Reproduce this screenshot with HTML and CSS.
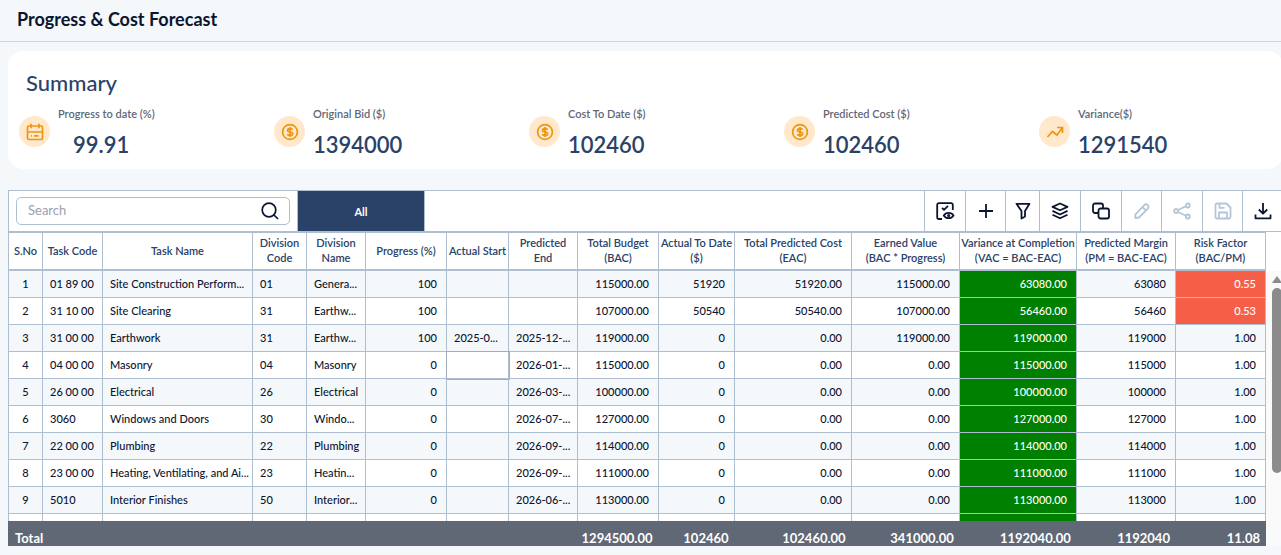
FILE: index.html
```html
<!DOCTYPE html>
<html lang="en">
<head>
<meta charset="utf-8">
<title>Progress &amp; Cost Forecast</title>
<link rel="stylesheet" href="styles.css">
</head>
<body>
<svg class="defs" aria-hidden="true">
  <symbol id="dollar" viewBox="0 0 18 18"><circle cx="9" cy="9" r="7.4"/><path d="M11.6 6.6C11.1 5.8 10.2 5.6 9 5.6c-1.5 0-2.5.6-2.5 1.7S7.500 8.900 9 9s2.600.600 2.600 1.700-1.100 1.700-2.600 1.700c-1.200 0-2.200-.300-2.700-1.100M9 4v10"/></symbol>
</svg>
<header class="page-header"><h1 class="page-title">Progress &amp; Cost Forecast</h1></header>
<main class="content">
  <section class="summary">
    <h2 class="summary-title">Summary</h2>
    <div class="metrics">
      <div class="metric">
        <span class="badge"><svg class="badge-icon" viewBox="0 0 18 18"><rect x="1.500" y="3" width="15" height="13.500" rx="1.500"/><path d="M1.500 9h15M5 .800v4.400M13 .800v4.400M5 12.800h1M8 12.800h4.500"/></svg></span>
        <div class="metric-text"><span class="metric-label">Progress to date (%)</span><span class="metric-value indented">99.91</span></div>
      </div>
      <div class="metric">
        <span class="badge"><svg class="badge-icon"><use href="#dollar"/></svg></span>
        <div class="metric-text"><span class="metric-label">Original Bid ($)</span><span class="metric-value">1394000</span></div>
      </div>
      <div class="metric">
        <span class="badge"><svg class="badge-icon"><use href="#dollar"/></svg></span>
        <div class="metric-text"><span class="metric-label">Cost To Date ($)</span><span class="metric-value">102460</span></div>
      </div>
      <div class="metric">
        <span class="badge"><svg class="badge-icon"><use href="#dollar"/></svg></span>
        <div class="metric-text"><span class="metric-label">Predicted Cost ($)</span><span class="metric-value">102460</span></div>
      </div>
      <div class="metric">
        <span class="badge"><svg class="badge-icon" viewBox="0 0 18 18"><path d="M1.500 14 6.500 8.500l4.500 3.500 5.500-7.500M11 4.500h5.500V10"/></svg></span>
        <div class="metric-text"><span class="metric-label">Variance($)</span><span class="metric-value">1291540</span></div>
      </div>
    </div>
  </section>

  <section class="grid-panel">
    <div class="toolbar">
      <label class="search">
        <input class="search-input" type="text" placeholder="Search" aria-label="Search">
        <svg class="search-icon" viewBox="0 0 18 18"><circle cx="8" cy="8" r="6.800"/><path d="m13 13 4 4"/></svg>
      </label>
      <button class="tab" type="button">All</button>
      <div class="tools">
        <button class="tool wide" type="button" aria-label="Columns"><svg class="icon" viewBox="0 0 20 20"><path d="M7 18H4a1.800 1.800 0 0 1-1.800-1.800V4A1.800 1.800 0 0 1 4 2.200h12A1.800 1.800 0 0 1 17.800 4v5M7 6.800l2 2 4-4"/><path d="M8.800 14.500c2-3.500 7.700-3.500 9.700 0-2 3.500-7.700 3.500-9.700 0Z"/><circle cx="13.700" cy="14.500" r=".7"/></svg></button>
        <button class="tool" type="button" aria-label="Add"><svg class="icon" viewBox="0 0 20 20"><path d="M10 3v14M3 10h14"/></svg></button>
        <button class="tool narrow" type="button" aria-label="Filter"><svg class="icon" viewBox="0 0 20 20"><path d="M3.500 2.800h13L12 10v5.500L8.500 17.500V10Z"/></svg></button>
        <button class="tool wide" type="button" aria-label="Layers"><svg class="icon" viewBox="0 0 20 20"><path d="m10 2.500 7.500 3.400L10 9.300 2.500 5.900ZM2.500 9.900l7.500 3.600 7.500-3.600M2.500 13.700l7.500 3.600 7.500-3.600"/></svg></button>
        <button class="tool wide" type="button" aria-label="Copy"><svg class="icon" viewBox="0 0 20 20"><rect x="7.500" y="7.500" width="10.500" height="10" rx="2"/><path d="M7.500 12H4a2 2 0 0 1-2-2V4.500a2 2 0 0 1 2-2h6a2 2 0 0 1 2 2v3"/></svg></button>
        <button class="tool" type="button" aria-label="Edit" disabled><svg class="icon" viewBox="0 0 20 20"><path d="M3.500 13.300 12.300 4.200a2.300 2.300 0 0 1 3.600 3.400L7 16.500l-3.800.500ZM10.500 6.200l3.300 3.300"/></svg></button>
        <button class="tool wide" type="button" aria-label="Share" disabled><svg class="icon" viewBox="0 0 20 20"><circle cx="4" cy="10" r="2"/><circle cx="15.800" cy="4.500" r="2"/><circle cx="15.800" cy="15.500" r="2"/><path d="m6 9 8-3.700M6 11l8 3.700"/></svg></button>
        <button class="tool" type="button" aria-label="Save" disabled><svg class="icon" viewBox="0 0 20 20"><path d="M2.500 4a1.500 1.500 0 0 1 1.500-1.500h9.500l4 4V16a1.500 1.500 0 0 1-1.500 1.500H4A1.500 1.500 0 0 1 2.500 16ZM6 17.500v-6h8v6M6.500 2.800v4h5"/></svg></button>
        <button class="tool" type="button" aria-label="Download"><svg class="icon" viewBox="0 0 20 20"><path d="M10 2v10.500M5.800 8.500l4.200 4.200 4.200-4.200M2.500 13.500v3.800h15v-3.800"/></svg></button>
      </div>
    </div>
    <div class="table-area">
      <table class="forecast">
        <thead>
          <tr><th><span>S.No</span></th><th><span>Task Code</span></th><th><span>Task Name</span></th><th><span>Division<br>Code</span></th><th><span>Division<br>Name</span></th><th><span>Progress (%)</span></th><th><span>Actual Start</span></th><th><span>Predicted<br>End</span></th><th><span>Total Budget<br>(BAC)</span></th><th><span>Actual To Date<br>($)</span></th><th><span>Total Predicted Cost<br>(EAC)</span></th><th><span>Earned Value<br>(BAC * Progress)</span></th><th><span>Variance at Completion<br>(VAC = BAC-EAC)</span></th><th><span>Predicted Margin<br>(PM = BAC-EAC)</span></th><th><span>Risk Factor<br>(BAC/PM)</span></th></tr>
        </thead>
        <tbody>
          <tr><td class="mid">1</td><td>01 89 00</td><td>Site Construction Perform...</td><td>01</td><td>Genera...</td><td class="num">100</td><td></td><td></td><td class="num">115000.00</td><td class="num">51920</td><td class="num">51920.00</td><td class="num">115000.00</td><td class="num good">63080.00</td><td class="num">63080</td><td class="num bad">0.55</td></tr>
          <tr><td class="mid">2</td><td>31 10 00</td><td>Site Clearing</td><td>31</td><td>Earthw...</td><td class="num">100</td><td></td><td></td><td class="num">107000.00</td><td class="num">50540</td><td class="num">50540.00</td><td class="num">107000.00</td><td class="num good">56460.00</td><td class="num">56460</td><td class="num bad">0.53</td></tr>
          <tr><td class="mid">3</td><td>31 00 00</td><td>Earthwork</td><td>31</td><td>Earthw...</td><td class="num">100</td><td>2025-0...</td><td>2025-12-...</td><td class="num">119000.00</td><td class="num">0</td><td class="num">0.00</td><td class="num">119000.00</td><td class="num good">119000.00</td><td class="num">119000</td><td class="num">1.00</td></tr>
          <tr><td class="mid">4</td><td>04 00 00</td><td>Masonry</td><td>04</td><td>Masonry</td><td class="num">0</td><td class="selected"></td><td>2026-01-...</td><td class="num">115000.00</td><td class="num">0</td><td class="num">0.00</td><td class="num">0.00</td><td class="num good">115000.00</td><td class="num">115000</td><td class="num">1.00</td></tr>
          <tr><td class="mid">5</td><td>26 00 00</td><td>Electrical</td><td>26</td><td>Electrical</td><td class="num">0</td><td></td><td>2026-03-...</td><td class="num">100000.00</td><td class="num">0</td><td class="num">0.00</td><td class="num">0.00</td><td class="num good">100000.00</td><td class="num">100000</td><td class="num">1.00</td></tr>
          <tr><td class="mid">6</td><td>3060</td><td>Windows and Doors</td><td>30</td><td>Windo...</td><td class="num">0</td><td></td><td>2026-07-...</td><td class="num">127000.00</td><td class="num">0</td><td class="num">0.00</td><td class="num">0.00</td><td class="num good">127000.00</td><td class="num">127000</td><td class="num">1.00</td></tr>
          <tr><td class="mid">7</td><td>22 00 00</td><td>Plumbing</td><td>22</td><td>Plumbing</td><td class="num">0</td><td></td><td>2026-09-...</td><td class="num">114000.00</td><td class="num">0</td><td class="num">0.00</td><td class="num">0.00</td><td class="num good">114000.00</td><td class="num">114000</td><td class="num">1.00</td></tr>
          <tr><td class="mid">8</td><td>23 00 00</td><td>Heating, Ventilating, and Ai...</td><td>23</td><td>Heatin...</td><td class="num">0</td><td></td><td>2026-09-...</td><td class="num">111000.00</td><td class="num">0</td><td class="num">0.00</td><td class="num">0.00</td><td class="num good">111000.00</td><td class="num">111000</td><td class="num">1.00</td></tr>
          <tr><td class="mid">9</td><td>5010</td><td>Interior Finishes</td><td>50</td><td>Interior...</td><td class="num">0</td><td></td><td>2026-06-...</td><td class="num">113000.00</td><td class="num">0</td><td class="num">0.00</td><td class="num">0.00</td><td class="num good">113000.00</td><td class="num">113000</td><td class="num">1.00</td></tr>
          <tr><td></td><td></td><td></td><td></td><td></td><td></td><td></td><td></td><td></td><td></td><td></td><td></td><td class="good"></td><td></td><td></td></tr>
        </tbody>
        <tfoot>
          <tr><td>Total</td><td></td><td></td><td></td><td></td><td></td><td></td><td></td><td class="num">1294500.00</td><td class="num">102460</td><td class="num">102460.00</td><td class="num">341000.00</td><td class="num">1192040.00</td><td class="num">1192040</td><td class="num">11.08</td></tr>
        </tfoot>
      </table>
      <div class="scroll-gutter" aria-hidden="true">
        <div class="scroll-track">
          <svg class="scroll-arrow" viewBox="0 0 10 7"><path d="M5 0 10 7H0Z"/></svg>
          <div class="scroll-thumb"></div>
        </div>
      </div>
    </div>
  </section>
</main>
</body>
</html>
```
FILE: styles.css
```css
* { box-sizing: border-box; }

body {
  margin: 0;
  overflow: hidden;
  background: #f4f8fb;
  color: #0b1530;
  font-family: Lato, "Open Sans", sans-serif;
  font-size: 11px;
}

button, input { font: inherit; }
.defs { display: none; }

.page-header {
  height: 42px;
  padding: 7px 17px;
  border-bottom: 1px solid #cdd6de;
}

.page-title {
  margin: 0;
  font-size: 18px;
  font-weight: 700;
  line-height: 24px;
}

.content { margin: 9px -2px 0 8px; }

.summary {
  height: 118px;
  padding: 17px 0 0;
  border-radius: 15px;
  background: #fff;
  color: #2a4268;
}

.summary-title {
  margin: 0 18px;
  font-size: 22px;
  font-weight: 500;
  line-height: 30px;
}

.metrics {
  display: grid;
  grid-template-columns: repeat(5, 1fr);
  padding-top: 8px;
}

.metric { display: flex; gap: 8px; padding-left: 11px; }

.badge {
  display: flex;
  flex: none;
  align-items: center;
  justify-content: center;
  width: 31px;
  height: 31px;
  margin-top: 10px;
  border-radius: 50%;
  background: #ffe8cc;
}

.badge-icon {
  width: 18px;
  height: 18px;
  fill: none;
  stroke: #f0950f;
  stroke-width: 1.7;
}

.metric-text { display: flex; flex-direction: column; }
.metric-label { color: #5f6878; font-weight: 600; line-height: 16px; }
.metric-value { padding-top: 8px; font-size: 22px; font-weight: 600; line-height: 30px; }
.indented { padding-left: 15px; }

.grid-panel { margin-top: 21px; }

.toolbar {
  display: flex;
  height: 42px;
  border: 1px solid #adbfd0;
  background: #fff;
}

.search {
  position: relative;
  width: 274px;
  margin: 6px 7px;
}

.search-input {
  width: 100%;
  height: 28px;
  padding: 0 40px 2px 11px;
  border: 1px solid #adbfd0;
  border-radius: 5px;
  background: #fff;
  font-size: 13px;
}

.search-input::placeholder { color: #9ca0ab; }

.search-icon {
  position: absolute;
  top: 5px;
  right: 11px;
  width: 18px;
  height: 18px;
  fill: none;
  stroke: #0b1530;
  stroke-width: 1.7;
}

.tab {
  width: 128px;
  border: solid #adbfd0;
  border-width: 0 1px;
  background: #2a4268;
  color: #fff;
  font-weight: 700;
}

.tools { display: flex; margin-left: auto; }

.tool {
  display: flex;
  align-items: center;
  justify-content: center;
  width: 40px;
  padding: 0;
  border: 0;
  border-left: 1px solid #adbfd0;
  background: #fff;
  color: #0b1530;
}

.tool.wide { width: 41px; }
.tool.narrow { width: 34px; }
.tool:disabled { color: #b4c6d6; }

.icon {
  width: 20px;
  height: 20px;
  fill: none;
  stroke: currentColor;
  stroke-width: 1.8;
  stroke-linejoin: round;
}

.table-area { display: flex; }

.forecast {
  display: block;
  flex: 1;
  background: #fff;
}

.forecast thead, .forecast tbody, .forecast tfoot { display: block; }

.forecast tr {
  display: grid;
  grid-template-columns: 34fr 60fr 150fr 54fr 59fr 81fr 62fr 69fr 81fr 76fr 117fr 108fr 117fr 99fr 90fr;
}

.forecast thead, .forecast tbody { border-left: 1px solid #adbfd0; }

.forecast th, .forecast td {
  min-width: 0;
  border-right: 1px solid #adbfd0;
  white-space: nowrap;
}

.forecast th {
  display: flex;
  align-items: center;
  justify-content: center;
  height: 39px;
  padding: 0 0 2px;
  border-top: 1px solid #adbfd0;
  border-bottom: 2px solid #adbfd0;
  color: #2a4268;
  font-weight: 600;
  line-height: 15px;
}

.forecast tbody { height: 250px; overflow: hidden; }
.forecast tbody tr:nth-child(odd) { background: #f4f8fb; }

.forecast tbody td {
  height: 27px;
  padding: 0 7px;
  border-bottom: 1px solid #adbfd0;
  font-weight: 500;
  line-height: 26px;
}

.forecast td.mid { text-align: center; }
.forecast tbody td.num { padding-right: 9px; text-align: right; }
.forecast tbody td.good { background: #008000; color: #fff; }
.forecast tbody td.bad { background: #f55f47; color: #fff; }
.forecast td.selected { outline: 1px solid #a3acb9; }

.forecast tfoot {
  height: 25px;
  overflow: hidden;
  background: #606876;
  color: #fff;
  font-size: 13px;
  font-weight: 700;
}

.forecast tfoot td {
  padding: 0 0 0 7px;
  border-color: transparent;
  line-height: 34px;
}

.forecast tfoot td.num { padding: 0 5px 0 0; text-align: right; }

.scroll-gutter {
  display: flex;
  flex: none;
  width: 17px;
  padding-top: 39px;
  background: #fff;
}

.scroll-track {
  flex: 1;
  padding: 5px 2px 0 6px;
  background: #fafafa;
}

.scroll-arrow { display: block; width: 10px; height: 7px; fill: #8b8b8b; }

.scroll-thumb {
  width: 10px;
  height: 185px;
  margin-top: 5px;
  border-radius: 5px;
  background: #8b8b8b;
}
```
